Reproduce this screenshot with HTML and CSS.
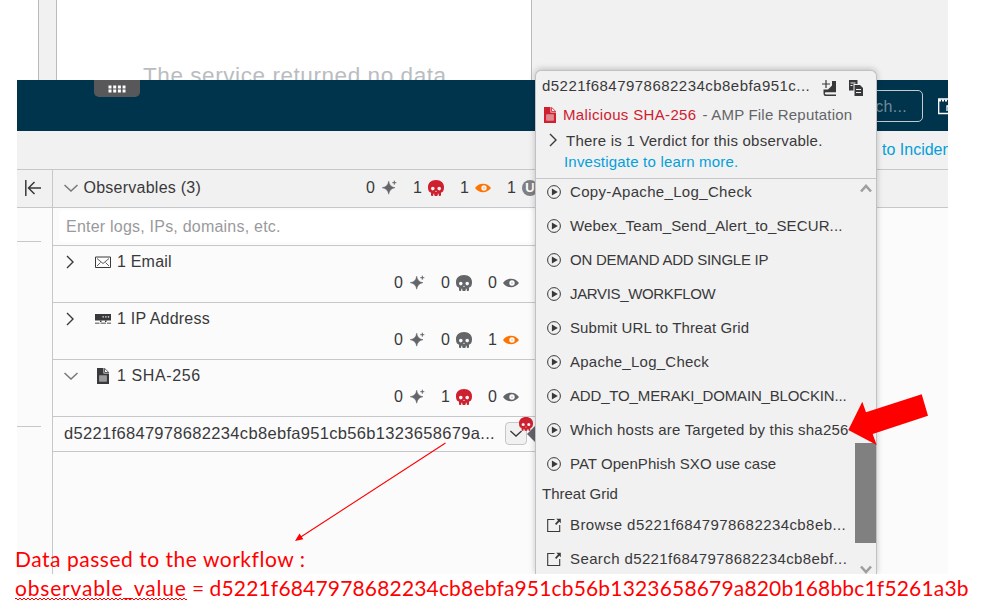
FILE: index.html
```html
<!DOCTYPE html>
<html lang="en">
<head>
<meta charset="utf-8">
<title>Observables</title>
<link rel="stylesheet" href="styles.css">
</head>
<body>
<svg class="defs" width="0" height="0">
  <symbol id="spark" viewBox="0 0 16 16"><path d="M7.700 1.200Q8.600 6.800 14 7.700Q8.600 8.600 7.700 14.200Q6.800 8.600 1.200 7.700Q6.800 6.800 7.700 1.200Z" stroke="currentColor" stroke-width=".5"/><path d="M13.300.7v4M11.300 2.700h4" stroke="currentColor" stroke-width="1"/></symbol>
  <symbol id="skull" viewBox="0 0 16 16"><path fill-rule="evenodd" d="M8 0C3 0 0 3 0 7c0 2 .4 3.600 1.100 4.600.5.700 1.900.500 1.900 1.400v1.700c0 .800.500 1.300 1.200 1.300s1.100-.5 1.100-1.300v-1h.9v1c0 .800.500 1.300 1.800 1.300s1.800-.5 1.800-1.300v-1h.9v1c0 .800.400 1.300 1.100 1.300s1.200-.5 1.200-1.300V13c0-.9 1.400-.7 1.900-1.400C15.600 10.600 16 9 16 7c0-4-3-7-8-7ZM4.800 6.800a1.800 1.800 0 1 1 0 3.600 1.800 1.800 0 0 1 0-3.600Zm6.400 0a1.800 1.800 0 1 1 0 3.600 1.800 1.800 0 0 1 0-3.600ZM8 10.600l.8 1.500H7.200Z"/></symbol>
  <symbol id="eye" viewBox="0 0 16 16"><path fill-rule="evenodd" d="M0 8C2 5.300 4.700 3.800 8 3.800S14 5.300 16 8c-2 2.700-4.700 4.200-8 4.200S2 10.700 0 8Zm9-2.700a2.700 2.700 0 1 0 0 5.400 2.700 2.700 0 0 0 0-5.400Z"/><circle cx="9" cy="8" r=".6"/></symbol>
  <symbol id="play" viewBox="0 0 14 14"><circle cx="7" cy="7" r="6.400" fill="none" stroke="currentColor" stroke-width="1"/><path d="M4.900 3.600L10.800 7L4.900 10.400Z"/></symbol>
  <symbol id="out" viewBox="0 0 14 14"><path d="M7.500 1.500H.7v12h12V7" fill="none" stroke="currentColor" stroke-width="1.100"/><path d="M9.300.8h4.500v4.500l-1.500-1.500-3.100 3.200-1.200-1.200L11 2.500Z"/></symbol>
  <symbol id="file" viewBox="0 0 12 16"><path fill-rule="evenodd" d="M0 0h6.500v5.500H12V16H0ZM2.300 7.500v6h7.400v-6Z"/><path d="M7.500.3 11.800 4.500H7.500Z" fill="none" stroke="currentColor" stroke-width=".8"/><path d="M2.300 7.500h7.400v6H2.300Z" opacity=".5"/></symbol>
  <symbol id="right" viewBox="0 0 8 14"><path d="M1 1l6 6-6 6" fill="none" stroke="currentColor" stroke-width="1.400"/></symbol>
  <symbol id="down" viewBox="0 0 14 8"><path d="M.5 1 7 7l6.500-6" fill="none" stroke="currentColor" stroke-width="1.500"/></symbol>
</svg>

<div class="backdrop">
  <div class="gutter"></div>
  <div class="card"><p>The service returned no data</p></div>
</div>

<div class="app">
  <header class="nav">
    <div class="handle"><svg width="18" height="8"><path d="M.5 2h17M.5 6h17" stroke="#fff" stroke-width="3" stroke-dasharray="3 1.700"/></svg></div>
    <div class="search">Search...</div>
    <svg class="window" width="20" height="17" fill="none" stroke="#fff" stroke-width="1.300"><path d="M.7 1h18v14.500H.7Z"/><path d="M1 2.500h17" stroke-width="2" stroke-dasharray="2 1"/><path d="M13 8H9v5"/></svg>
  </header>
  <div class="linkbar"><a>to Incident</a></div>
  <div class="main">
    <aside class="rail">
      <div class="rail-head"><svg width="16" height="16" fill="none" stroke="#39393b" stroke-width="1.500"><path d="M.8 0v16M16 8H4M9.500 2 3.500 8l6 6"/></svg></div>
      <div class="tick"></div><div class="tick second"></div>
    </aside>
    <section class="panel">
      <div class="panel-head">
        <svg class="chev"><use href="#down"/></svg><h2>Observables (3)</h2>
        <div class="counts">
          <span>0</span><svg class="ic gray"><use href="#spark"/></svg>
          <span>1</span><svg class="ic red"><use href="#skull"/></svg>
          <span>1</span><svg class="ic orange"><use href="#eye"/></svg>
          <span>1</span><b class="unknown">U</b>
        </div>
      </div>
      <div class="input-row"><div class="input">Enter logs, IPs, domains, etc.</div></div>
      <div class="group">
        <div class="title"><svg class="caret"><use href="#right"/></svg>
          <svg class="kind" viewBox="0 0 16 16" fill="none" stroke="#39393b"><path d="M.5 3h15v10.500H.5Z"/><path d="M2 4.500l6 5 6-5M2 12l3.500-3.500M14 12l-3.500-3.500" stroke-width=".8"/></svg>
          <span>1 Email</span></div>
        <div class="counts"><span>0</span><svg class="ic gray"><use href="#spark"/></svg><span>0</span><svg class="ic gray"><use href="#skull"/></svg><span>0</span><svg class="ic gray"><use href="#eye"/></svg></div>
      </div>
      <div class="group">
        <div class="title"><svg class="caret"><use href="#right"/></svg>
          <svg class="kind" viewBox="0 0 16 16" fill="#39393b"><path fill-rule="evenodd" d="M0 3h16v6.500H0ZM7.500 5.300v1.200h1.300V5.300Zm2.700 0v1.200h1.300V5.300Zm2.600 0v1.200h1.300V5.300Z"/><path d="M5 9.500h1.500V11H5Zm5 0h1.500V11H10Z"/><path d="M0 11.500h4.500V13H0Zm5.500 0h5.500V13H5.500Zm6.500 0h4V13h-4Z" opacity=".6"/></svg>
          <span>1 IP Address</span></div>
        <div class="counts"><span>0</span><svg class="ic gray"><use href="#spark"/></svg><span>0</span><svg class="ic gray"><use href="#skull"/></svg><span>1</span><svg class="ic orange"><use href="#eye"/></svg></div>
      </div>
      <div class="group">
        <div class="title"><svg class="chev"><use href="#down"/></svg>
          <svg class="kind"><use href="#file"/></svg><span class="sha">1 SHA-256</span></div>
        <div class="counts"><span>0</span><svg class="ic gray"><use href="#spark"/></svg><span>1</span><svg class="ic red"><use href="#skull"/></svg><span>0</span><svg class="ic gray"><use href="#eye"/></svg></div>
      </div>
      <div class="hash-row">
        <span class="hash">d5221f6847978682234cb8ebfa951cb56b1323658679a...</span>
        <div class="pivot"><svg width="12" height="7"><use href="#down"/></svg><svg class="badge"><use href="#skull"/></svg></div>
      </div>
    </section>
  </div>
</div>

<div class="pointer"></div>
<div class="popover">
  <div class="pop-head">
    <div class="pop-title"><span>d5221f6847978682234cb8ebfa951c...</span>
      <svg width="15" height="16" viewBox="0 0 15 16" fill="#39393b"><path d="M4 0v8M0 4h8" stroke="#39393b" stroke-width="1.200"/><path d="M14 1v11.200H4Q2.800 12.200 2.800 13.300T4 14.400H14V16H3.500Q1.500 16 1.500 13.500V9.500H6L10 5.500V1Z"/></svg>
      <svg width="14" height="16" viewBox="0 0 14 16" fill="#39393b"><path d="M0 0h8.500v4H4.500v6.500H0Z"/><path d="M5.500 5H11l3 3v8H5.500Z"/><path d="M1.500 3h5M1.500 5.500h2M7 9.500h5M7 12.500h5" stroke="#f1f1f1" stroke-width="1"/></svg>
    </div>
    <div class="judgement"><svg class="red"><use href="#file"/></svg><b>Malicious SHA-256</b><i>- AMP File Reputation</i></div>
    <div class="verdict"><svg><use href="#right"/></svg><span>There is 1 Verdict for this observable.</span></div>
    <a class="investigate">Investigate to learn more.</a>
  </div>
  <div class="pop-body">
    <ul>
      <li><svg><use href="#play"/></svg><span class="w1">Copy-Apache_Log_Check</span></li>
      <li><svg><use href="#play"/></svg><span class="w2">Webex_Team_Send_Alert_to_SECUR...</span></li>
      <li><svg><use href="#play"/></svg><span class="w3">ON DEMAND ADD SINGLE IP</span></li>
      <li><svg><use href="#play"/></svg><span class="w4">JARVIS_WORKFLOW</span></li>
      <li><svg><use href="#play"/></svg><span class="w5">Submit URL to Threat Grid</span></li>
      <li><svg><use href="#play"/></svg><span class="w6">Apache_Log_Check</span></li>
      <li><svg><use href="#play"/></svg><span class="w7">ADD_TO_MERAKI_DOMAIN_BLOCKIN...</span></li>
      <li><svg><use href="#play"/></svg><span class="w8">Which hosts are Targeted by this sha256</span></li>
      <li><svg><use href="#play"/></svg><span class="w9">PAT OpenPhish SXO use case</span></li>
      <li class="section">Threat Grid</li>
      <li><svg><use href="#out"/></svg><span class="w10">Browse d5221f6847978682234cb8eb...</span></li>
      <li><svg><use href="#out"/></svg><span class="w11">Search d5221f6847978682234cb8ebf...</span></li>
    </ul>
    <div class="scrollbar">
      <svg width="12" height="9" fill="none" stroke="#9f9f9f" stroke-width="2.600"><path d="M1 7.500 6 2l5 5.500"/></svg>
      <div class="thumb"></div>
      <svg width="12" height="9" fill="none" stroke="#9f9f9f" stroke-width="2.600"><path d="M1 1.500 6 7l5-5.500"/></svg>
    </div>
  </div>
</div>

<svg class="arrows" width="982" height="606">
  <path d="M445.500 443 300 537.500" stroke="#f00" stroke-width="1.100"/>
  <path d="M295 541l4.500-7.500 3.800 5.800Z" fill="#f00"/>
  <path d="M848.300 430 862.300 401.700 866 412.300 921.700 394.300 928 415.700 872.700 434 876.700 445Z" fill="#f00"/>
</svg>
<div class="note">
  <p class="n1">Data passed to the workflow :</p>
  <p class="n2"><u>observable_value</u> = <span>d5221f6847978682234cb8ebfa951cb56b1323658679a820b168bbc1f5261a3b</span></p>
</div>
</body>
</html>
```
FILE: styles.css
```css
* { box-sizing: border-box; }
body {
  margin: 0;
  position: relative;
  width: 982px;
  height: 606px;
  overflow: hidden;
  background: #fff;
  color: #39393b;
  font: 16px/20px "Liberation Sans", Arial, sans-serif;
}
p, h2, ul { margin: 0; padding: 0; font-weight: 400; font-size: inherit; }
.defs { position: absolute; }
svg { fill: currentColor; flex: none; }
svg[fill="none"] { fill: none; }
.gray { color: #636569; }
.red { color: #cf2030; }
.orange { color: #ff7300; }

.backdrop { display: flex; width: 910px; height: 80px; margin-left: 38px; background: #f1f1f1; border-left: 1px solid #b9babc; }
.gutter { width: 17px; }
.card { width: 476px; border: solid #b9babc; border-width: 0 1px; background: #fff; overflow: hidden; padding: 63px 0 0 86px; }
.card p { font-size: 22.5px; line-height: 26px; color: #b9bdc1; letter-spacing: .57px; white-space: nowrap; }

.app { width: 931px; height: 494px; margin-left: 17px; background: #fbfbfb; overflow: hidden; }
.nav { display: flex; height: 51px; background: #00344d; }
.handle { width: 46px; height: 17px; margin-left: 77px; background: #58585b; border-radius: 0 0 5px 5px; display: flex; justify-content: center; align-items: center; flex: none; }
.search { width: 300px; height: 32px; margin: 10px 15px 0 483px; padding-right: 15px; border: 1px solid #c3ccd1; border-radius: 5px; color: #738b97; text-align: right; line-height: 31px; letter-spacing: .3px; flex: none; }
.window { margin-top: 18px; }
.linkbar { height: 39px; background: #f1f1f1; border-bottom: 1px solid #c6c7ca; padding: 9px 0 0 865px; color: #049fd9; white-space: nowrap; }
.main { display: flex; height: 404px; }
.rail { width: 36px; border-right: 1px solid #c6c7ca; }
.rail-head { height: 38px; background: #f1f1f1; border-bottom: 1px solid #c6c7ca; padding: 10px 0 0 8px; }
.tick { width: 24px; height: 1px; margin-top: 33px; background: #c6c7ca; }
.second { margin-top: 184px; }
.panel { flex: 1; }
.panel-head { display: flex; align-items: center; height: 38px; padding: 0 0 2px 11px; background: #f1f1f1; border-bottom: 1px solid #c6c7ca; }
.panel-head h2 { width: 282px; margin-left: 5.5px; letter-spacing: .25px; }
.panel-head .counts { margin-left: .5px; }
.chev { width: 14px; height: 8px; color: #77787b; }
.counts { display: grid; grid-template-columns: repeat(4, 11px 36px); align-items: center; }
.ic { width: 16px; height: 16px; margin-left: 4px; }
.unknown { width: 16px; height: 16px; margin-left: 4px; border-radius: 50%; background: #7f8083; color: #fff; font-size: 13px; line-height: 16px; text-align: center; }
.input-row { width: 483px; height: 38px; padding: 2px 0 3px 6px; border-bottom: 1px solid #c6c7ca; }
.input { height: 32px; padding-left: 7px; background: #fff; border-radius: 4px; color: #9a9a9c; line-height: 34px; letter-spacing: .22px; }
.group { width: 483px; height: 57px; padding-top: 5px; border-bottom: 1px solid #c6c7ca; }
.title { display: grid; grid-template-columns: 42px 22px 1fr; align-items: center; height: 21px; }
.title > span { letter-spacing: .2px; }
.title > .sha { letter-spacing: .6px; }
.title .chev { margin-left: 11px; }
.caret { width: 8px; height: 14px; margin-left: 13px; }
.kind { width: 16px; height: 16px; }
.group .counts { margin-left: 341px; height: 22px; }
.hash-row { display: flex; align-items: center; width: 483px; height: 35px; padding: 0 0 1px 11px; border-bottom: 1px solid #c6c7ca; }
.hash { width: 441px; margin-top: -2px; font-size: 16.500px; letter-spacing: .32px; white-space: nowrap; }
.pivot { position: relative; display: flex; align-items: center; justify-content: center; width: 22px; height: 23px; border: 1px solid #c6c7ca; border-radius: 4px; background: #f1f1f1; flex: none; }
.badge { position: absolute; left: 13px; top: -6px; width: 14px; height: 14px; color: #cf2030; }

.pointer { position: absolute; left: 527px; top: 426px; border: 8px solid transparent; border-right-color: #636569; border-left: 0; }
.popover { position: absolute; left: 535px; top: 70px; width: 342px; height: 504px; background: #f1f1f1; border: 1px solid #c0c1c4; border-bottom: 0; border-radius: 6px 6px 0 0; box-shadow: 0 -1px 6px rgba(0,0,0,.22); clip-path: inset(-8px -8px 0 -8px); font-size: 15px; white-space: nowrap; }
.pop-head { height: 108px; border-bottom: 1px solid #c6c7ca; padding-left: 6px; }
.pop-title { display: flex; align-items: center; height: 30px; padding-top: 3px; }
.pop-title span { width: 280px; font-size: 15px; letter-spacing: .47px; margin-top: -4px; }
.pop-title svg + svg { margin-left: 12px; }
.judgement { display: flex; align-items: center; height: 28px; padding-left: 2px; }
.judgement svg { width: 12px; height: 16px; }
.judgement b { margin-left: 7px; font-weight: 400; color: #cf2030; letter-spacing: .35px; }
.judgement i { margin-left: 6px; font-style: normal; color: #636569; letter-spacing: .2px; }
.verdict { display: flex; align-items: center; height: 24px; }
.verdict svg { width: 8px; height: 14px; margin: -3px 9px 0 7px; }
.verdict span { letter-spacing: .23px; }
.investigate { display: block; margin-left: 22px; line-height: 18px; color: #049fd9; letter-spacing: .2px; }
.pop-body { display: flex; height: 395px; overflow: hidden; }
ul { list-style: none; width: 319px; margin-top: -4px; flex: none; }
li { display: flex; align-items: center; height: 34px; padding-left: 11px; }
li svg { width: 14px; height: 14px; margin-right: 9px; }
li.section { height: 27px; padding: 0 0 2px 6px; }
.scrollbar { display: flex; flex-direction: column; align-items: center; width: 21px; height: 395px; padding-top: 5px; }
.scrollbar > svg { flex: none; }
.thumb { width: 21px; height: 100px; margin: 250px 0 22px; background: #808080; flex: none; }
.w1 { letter-spacing: .33px; }
.w2 { letter-spacing: .13px; }
.w3 { letter-spacing: -.26px; }
.w4 { letter-spacing: -.35px; }
.w5 { letter-spacing: .1px; }
.w6 { letter-spacing: .25px; }
.w7 { letter-spacing: -.16px; }
.w8 { letter-spacing: .2px; }
.w9 { letter-spacing: .04px; }
.w10 { letter-spacing: .42px; }
.w11 { letter-spacing: .39px; }

.arrows { position: absolute; left: 0; top: 0; }
.note { position: absolute; left: 15px; top: 544px; color: #f00; font: 21px/29px Lato, "Open Sans", sans-serif; white-space: nowrap; }
.n1 { letter-spacing: .52px; }
.n2 span { letter-spacing: .17px; }
.n2 u {
  display: inline-block;
  height: 29px;
  letter-spacing: .8px;
  text-decoration: none;
  background:
    linear-gradient(45deg, transparent 35%, #f00 35% 65%, transparent 65%) 0 25px / 4px 2px repeat-x,
    linear-gradient(-45deg, transparent 35%, #f00 35% 65%, transparent 65%) 2px 25px / 4px 2px repeat-x;
}
```
